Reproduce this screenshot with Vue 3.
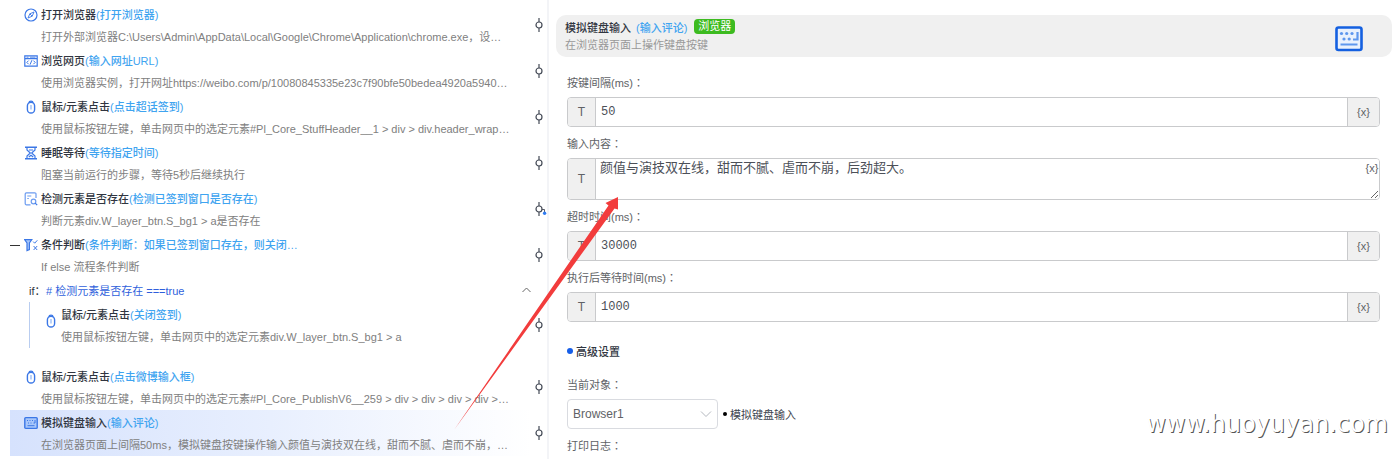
<script setup>
import { ref } from 'vue'

const steps = [
  { icon: 'compass', title: '打开浏览器', note: '(打开浏览器)', desc: '打开外部浏览器C:\\Users\\Admin\\AppData\\Local\\Google\\Chrome\\Application\\chrome.exe，设…' },
  { icon: 'page', title: '浏览网页', note: '(输入网址URL)', desc: '使用浏览器实例，打开网址https://weibo.com/p/10080845335e23c7f90bfe50bedea4920a5940…' },
  { icon: 'mouse', title: '鼠标/元素点击', note: '(点击超话签到)', desc: '使用鼠标按钮左键，单击网页中的选定元素#Pl_Core_StuffHeader__1 > div > div.header_wrap…' },
  { icon: 'hourglass', title: '睡眠等待', note: '(等待指定时间)', desc: '阻塞当前运行的步骤，等待5秒后继续执行' },
  { icon: 'search', title: '检测元素是否存在', note: '(检测已签到窗口是否存在)', desc: '判断元素div.W_layer_btn.S_bg1 > a是否存在', linked: true },
  { icon: 'branch', title: '条件判断', note: '(条件判断：如果已签到窗口存在，则关闭…', desc: 'If else 流程条件判断', open: true },
  { kind: 'if' },
  { icon: 'mouse', title: '鼠标/元素点击', note: '(关闭签到)', desc: '使用鼠标按钮左键，单击网页中的选定元素div.W_layer_btn.S_bg1 > a', nested: true },
  { icon: 'mouse', title: '鼠标/元素点击', note: '(点击微博输入框)', desc: '使用鼠标按钮左键，单击网页中的选定元素#Pl_Core_PublishV6__259 > div > div > div > div >…' },
  { icon: 'keyboard', title: '模拟键盘输入', note: '(输入评论)', desc: '在浏览器页面上间隔50ms，模拟键盘按键操作输入颜值与演技双在线，甜而不腻、虐而不崩，…', active: true },
]

const fields = ref([
  { id: 'interval', label: '按键间隔(ms)', value: '50' },
  { id: 'content', label: '输入内容', value: '颜值与演技双在线，甜而不腻、虐而不崩，后劲超大。', multi: true },
  { id: 'timeout', label: '超时时间(ms)', value: '30000' },
  { id: 'delay', label: '执行后等待时间(ms)', value: '1000' },
])
const target = ref('Browser1')
</script>

<template>
  <div class="app">
    <section class="flow">
      <template v-for="(s, i) in steps" :key="i">
        <div v-if="s.kind === 'if'" class="cond">
          <span class="cond-if">if：</span>
          <a href="#" class="cond-link"># 检测元素是否存在 ===true</a>
          <button class="fold" aria-label="收起">
            <svg width="9" height="6" viewBox="0 0 9 6"><path d="M.5 5 4.500 1 8.500 5" fill="none" stroke="#666" /></svg>
          </button>
        </div>
        <div v-else class="step" :class="{ nested: s.nested, active: s.active }">
          <div class="body">
            <span class="toggle"><i v-if="s.open"></i></span>
            <svg class="icon" width="14" height="14" viewBox="0 0 14 14" fill="none" stroke="#3b77e6" stroke-width="1.2">
              <template v-if="s.icon === 'compass'">
                <circle cx="7" cy="7" r="6" />
                <path d="M10 4 8.200 8.200 4 10 5.800 5.800zM5.800 5.800 8.200 8.200" stroke-width="0.9" />
              </template>
              <template v-else-if="s.icon === 'page'">
                <path d="M.8 1.800h12.400v10.400H.8zM.8 4.600h12.400" />
                <path d="M2.500 3.200h2M6 3.200h5.500" stroke-width="0.8" />
                <path d="M4.600 6.600 2.800 8.400l1.800 1.800M9.400 6.600l1.800 1.800-1.800 1.800M7.900 6.200 6.100 10.600" stroke-width="1" />
              </template>
              <template v-else-if="s.icon === 'mouse'">
                <rect x="3.400" y="2.200" width="7.200" height="10.800" rx="3.600" stroke-width="1.400" />
                <path d="M5 2.600C5 .6 9 .6 9 2.600" />
                <path d="M7 5v4.500" stroke="#8db4f5" />
              </template>
              <template v-else-if="s.icon === 'hourglass'">
                <path d="M1 1.200h12M1 12.800h12" stroke-width="1.600" />
                <path d="M3 1.500v2.500L6.300 7 3 10v2.500M11 1.500v2.500L7.700 7 11 10v2.500M4.800 11 7 9.300 9.200 11M5 4h4" />
              </template>
              <template v-else-if="s.icon === 'search'">
                <path d="M6.500 12.800H2.400a1.200 1.200 0 0 1-1.200-1.200V2A1.200 1.200 0 0 1 2.400.8h8.400A1.200 1.200 0 0 1 12 2v4" stroke="#6b9bf0" />
                <path d="M3.300 4h4M3.300 6.500h1.500" stroke="#6b9bf0" />
                <circle cx="9.500" cy="9.500" r="2.300" stroke="#6b9bf0" /><path d="m11.200 11.200 2 2" />
              </template>
              <template v-else-if="s.icon === 'branch'">
                <path d="M.6 1.600h7.200L5.400 5v6.500L3 12.600V5z" fill="#a9c7fa" />
                <path d="m9.200 3.600 1.500 1.600 2.600-2.900M9.600 8l3.600 4M13.200 8l-3.600 4" stroke-width="1" />
              </template>
              <template v-else>
                <rect x=".8" y="1.600" width="12.400" height="10.800" rx="1" fill="#a9c7fa" stroke-width="1.400" />
                <path d="M3 4.500h1M5.500 4.500h1M8 4.500h1M4 7h1M6.500 7h1M11 4v3H9.500M3.500 9.700h7" stroke-width="1" />
              </template>
            </svg>
            <div class="text">
              <div class="title">{{ s.title }}<span class="note">{{ s.note }}</span></div>
              <div class="desc">{{ s.desc }}</div>
            </div>
          </div>
          <span class="node">
            <svg width="16" height="16" viewBox="0 0 16 16" fill="none" stroke="#454b57" stroke-width="1.200">
              <path d="M8 1v4M8 11v4" /><circle cx="8" cy="8" r="3" />
              <template v-if="s.linked"><path d="M11 8.500h2.500V11" stroke-width="0.900" /><circle cx="13.600" cy="12.300" r="1.700" fill="#2f7bf0" stroke="none" /></template>
            </svg>
          </span>
        </div>
      </template>
    </section>

    <section class="panel">
      <header class="head">
        <div>
          <div class="head-title">模拟键盘输入 <span class="note">(输入评论)</span><span class="tag">浏览器</span></div>
          <div class="head-desc">在浏览器页面上操作键盘按键</div>
        </div>
        <svg width="28" height="26" viewBox="0 0 28 26" fill="none">
          <rect x="1.500" y="1.500" width="25" height="22.500" rx="2" fill="#e9f1fd" stroke="#1460e0" stroke-width="2.600" />
          <g fill="#5e97ee"><circle cx="6.500" cy="7.500" r="1.600" /><circle cx="11.700" cy="7.500" r="1.600" /><circle cx="17" cy="7.500" r="1.600" /><circle cx="9" cy="13" r="1.600" /><circle cx="14.200" cy="13" r="1.600" /></g>
          <path d="M22.500 6v7.500H18M5.500 18.500h17" stroke="#5e97ee" stroke-width="2.200" />
        </svg>
      </header>

      <form class="form" @submit.prevent>
        <div v-for="f in fields" :key="f.id" class="field">
          <label :for="f.id">{{ f.label }}<span class="colon">：</span></label>
          <div class="group" :class="{ multi: f.multi }">
            <span class="addon">T</span>
            <textarea v-if="f.multi" :id="f.id" v-model="f.value" spellcheck="false"></textarea>
            <input v-else :id="f.id" v-model="f.value" type="text" />
            <button type="button" class="var">{x}</button>
          </div>
        </div>

        <h2 class="section">高级设置</h2>

        <div class="field">
          <label for="target">当前对象<span class="colon">：</span></label>
          <div class="pick">
            <span class="select">
              <select id="target" v-model="target"><option>Browser1</option></select>
              <svg width="12" height="8" viewBox="0 0 12 8"><path d="M1 1.500 6 6.500 11 1.500" fill="none" stroke="#b4b8bf" /></svg>
            </span>
            <span class="current">模拟键盘输入</span>
          </div>
        </div>
        <div class="field">
          <span class="label">打印日志<span class="colon">：</span></span>
        </div>
      </form>
    </section>

    <svg class="arrow" width="170" height="236" viewBox="0 0 170 236" aria-hidden="true">
      <path d="M1 234 155.500 9.500 152.500 7 165 1 165 13.500 161.500 12.500z" fill="#f23c3c" />
    </svg>
    <div class="mark">www.huoyuyan.com</div>
  </div>
</template>

<style>
body { margin: 0; background: #fff; }
</style>

<style scoped>
.app {
  position: relative;
  display: grid;
  grid-template-columns: 547fr 853fr;
  height: 100vh;
  overflow: hidden;
  font-family: "Liberation Sans", "Noto Sans CJK SC", sans-serif;
  font-size: 11px;
  color: #303540;
}
.app * { box-sizing: border-box; }
button, input, textarea, select { font: inherit; color: inherit; margin: 0; outline: none; }
button { padding: 0; border: 0; background: none; cursor: pointer; }
.flow { min-width: 0; padding: 2px 0 0 10px; }
.step { display: flex; height: 46px; }
.body { display: flex; flex: 1; min-width: 0; }
.active .body { background: linear-gradient(90deg, #d6e2fd, #e8effe 50%, #fff); }
.toggle { width: 14px; padding-top: 13px; }
.toggle i { display: block; width: 10px; height: 1px; background: #333; }
.icon { flex: none; margin: 6px 3px 0 0; }
.text { min-width: 0; }
.title, .desc { overflow: hidden; line-height: 22px; white-space: nowrap; }
.title { padding-top: 2px; font-weight: 500; }
.desc { height: 22px; color: #808080; }
.note { color: #3fa4f0; }
.node { display: flex; align-items: center; width: 16px; }
.cond { display: flex; align-items: center; height: 24px; padding: 0 16px 0 19px; }
.cond-if { width: 17px; white-space: nowrap; }
.cond-link { flex: 1; color: #2f5fdc; text-decoration: none; }
.fold { display: flex; }
.nested { margin: 0 0 16px 19px; }
.nested .body { border-left: 1px solid #b9cdf0; }
.nested .icon { margin-top: 12px; }
.panel { min-width: 0; padding: 15px 8px 0 7px; border-left: 2px solid #f3f4f7; }
.head { display: flex; align-items: center; justify-content: space-between; height: 42px; padding: 0 29px 0 9px; border-radius: 10px; background: #f0f0f0; }
.head svg { margin-top: 5px; }
.head-title { display: flex; align-items: center; gap: 5px; height: 19px; font-weight: 500; }
.head-desc { height: 19px; line-height: 19px; color: #999; }
.tag { margin-left: 2px; padding: 0 4px; border-radius: 4px; background: #3dbb20; color: #fff; line-height: 15px; font-weight: 400; }
.form { display: flex; flex-direction: column; gap: 1px; padding: 10px 12px 0 11px; color: #606266; }
label, .label { display: flex; align-items: center; height: 30px; }
.colon { font-family: "Noto Sans CJK TC", sans-serif; }
.group { position: relative; display: flex; height: 30px; border: 1px solid #c9cacc; border-radius: 4px; overflow: hidden; }
.group.multi { height: 42px; }
.addon { display: flex; align-items: center; justify-content: center; flex: none; width: 28px; border-right: 1px solid #c9cacc; background: #f0f0f0; font-size: 12px; }
.group input, .group textarea { flex: 1; min-width: 0; padding: 0 5px; border: 0; background: #fff; color: #4c5058; font-family: "Liberation Mono", "Noto Sans CJK SC", monospace; font-size: 12px; }
.group textarea { resize: vertical; font-size: 13px; line-height: 20px; height: 40px; padding: 0 4px; }
.var { width: 32px; border-left: 1px solid #c9cacc; background: #f0f0f0; }
.multi .var { position: absolute; top: 0; right: 0; width: 14px; border: 0; background: none; line-height: 18px; }
.section { display: flex; align-items: center; gap: 3px; height: 36px; margin: 10px 0 0; color: #303540; font-size: 11px; font-weight: 500; }
.section::before { content: ""; width: 6px; height: 6px; border-radius: 50%; background: #165ee8; }
.section + .field { margin-top: -1px; }
.pick { display: flex; align-items: center; gap: 5px; }
.select { position: relative; width: 151px; }
.select select { display: block; width: 100%; height: 30px; padding: 0 24px 0 5px; border: 1px solid #d9dbe0; border-radius: 4px; background: #fff; appearance: none; font-size: 12px; }
.select svg { position: absolute; top: 11px; right: 6px; pointer-events: none; }
.current { display: flex; align-items: center; gap: 3px; color: #404550; }
.current::before { content: ""; width: 4px; height: 4px; border-radius: 50%; background: #000; }
.arrow { position: absolute; left: 453px; top: 196px; pointer-events: none; }
.mark { position: absolute; right: 12px; bottom: 19px; color: #fff; font: 400 24px/32px "DejaVu Sans", sans-serif; text-shadow: 1px 1px 0 #555; }
</style>
